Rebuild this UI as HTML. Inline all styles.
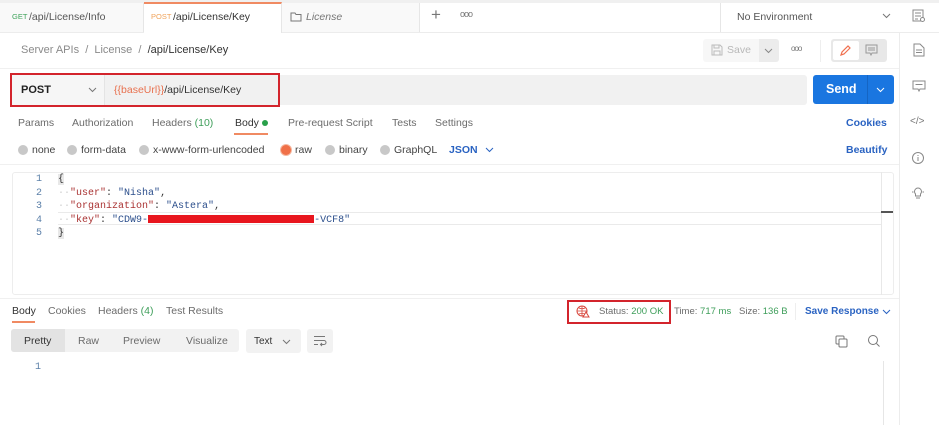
<!DOCTYPE html>
<html><head><meta charset="utf-8">
<style>
*{margin:0;padding:0;box-sizing:border-box}
body{width:939px;height:425px;overflow:hidden;background:#fff;font-family:"Liberation Sans",sans-serif;font-size:10.5px;color:#6b6b6b;position:relative}
.a{position:absolute;white-space:nowrap}
.mono{font-family:"Liberation Mono",monospace;font-size:10px}
.rad{position:absolute;width:10px;height:10px;border-radius:50%;background:#c8c8c8}
</style></head><body>
<div class="a" style="left:0;top:0;width:939px;height:3px;background:#f0f0f0"></div>
<div class="a" style="left:0;top:32px;width:939px;height:1px;background:#ececec"></div>
<div class="a" style="left:0;top:3px;width:144px;height:29px;background:#f9f9f9;border-right:1px solid #e6e6e6"></div>
<div class="a" style="left:144px;top:2px;width:138px;height:31px;background:#fff;border-top:2px solid #f08a62;border-right:1px solid #e6e6e6"></div>
<div class="a" style="left:282px;top:3px;width:138px;height:29px;background:#f9f9f9;border-right:1px solid #e6e6e6"></div>
<div class="a" style="left:420px;top:3px;width:300px;height:29px;background:#fff"></div>
<span class="a" style="left:12px;top:12px;font-size:7.5px;color:#3fa35b">GET</span>
<span class="a" style="left:29px;top:11px;color:#555">/api/License/Info</span>
<span class="a" style="left:151px;top:12px;font-size:7.5px;color:#f0a35a">POST</span>
<span class="a" style="left:173px;top:11px;color:#333">/api/License/Key</span>
<svg class="a" style="left:290px;top:11px" width="12" height="11"><path d="M1 2h4l1 1.5h5v6.5h-10z" fill="none" stroke="#777"/></svg>
<span class="a" style="left:306px;top:11px;font-style:italic;color:#777">License</span>
<span class="a" style="left:431px;top:5px;font-size:17px;color:#777">+</span>
<span class="a" style="left:460px;top:9px;font-size:9px;color:#777;letter-spacing:-1px">ooo</span>
<div class="a" style="left:720px;top:3px;width:1px;height:29px;background:#e6e6e6"></div>
<span class="a" style="left:737px;top:11px;color:#555">No Environment</span>
<svg class="a" style="left:882px;top:13px" width="9" height="6"><path d="M1 1l3.5 3.5L8 1" fill="none" stroke="#777"/></svg>
<div class="a" style="left:899px;top:33px;width:1px;height:392px;background:#ececec"></div>
<svg class="a" style="left:912px;top:9px" width="14" height="14"><rect x="1" y="1" width="10" height="11" fill="none" stroke="#888"/><path d="M3 4h6M3 7h6M3 10h3" stroke="#888"/><circle cx="10.5" cy="10.5" r="2" fill="#fff" stroke="#888"/></svg>
<svg class="a" style="left:913px;top:43px" width="12" height="14"><path d="M1 1h6l4 4v8H1z M3 7h6M3 9.5h6" fill="none" stroke="#888"/></svg>
<svg class="a" style="left:912px;top:80px" width="14" height="13"><path d="M1 1h12v8H8l-1 2-1-2H1z M3.5 4.5h7" fill="none" stroke="#888"/></svg>
<span class="a" style="left:910px;top:116px;font-size:10px;color:#777">&lt;/&gt;</span>
<svg class="a" style="left:911px;top:151px" width="14" height="14"><circle cx="7" cy="7" r="5.5" fill="none" stroke="#888"/><path d="M7 6v4M7 4v1" stroke="#888"/></svg>
<svg class="a" style="left:911px;top:186px" width="14" height="14"><path d="M4.5 8a3.5 3.5 0 1 1 5 0v2h-5z M5 12h4M1 6h1.5M11.5 6H13" fill="none" stroke="#888"/></svg>
<span class="a" style="left:21px;top:44px;font-size:11px;color:#8a8a8a">Server APIs&nbsp; / &nbsp;License&nbsp; / &nbsp;<b style="color:#333;font-weight:normal">/api/License/Key</b></span>
<div class="a" style="left:703px;top:39px;width:76px;height:23px;background:#f7f7f7;border-radius:3px"></div>
<div class="a" style="left:759px;top:39px;width:20px;height:23px;background:#ececec;border-radius:0 3px 3px 0"></div>
<svg class="a" style="left:711px;top:44px" width="12" height="12"><path d="M1 1h8l2 2v8H1z M3 1v3h5V1 M3 11V7h6v4" fill="none" stroke="#bbb"/></svg>
<span class="a" style="left:727px;top:44px;color:#b8b8b8">Save</span>
<svg class="a" style="left:764px;top:48px" width="9" height="6"><path d="M1 1l3.5 3.5L8 1" fill="none" stroke="#888"/></svg>
<span class="a" style="left:791px;top:44px;font-size:8px;color:#777;letter-spacing:-1px">ooo</span>
<div class="a" style="left:820px;top:40px;width:1px;height:22px;background:#eee"></div>
<div class="a" style="left:831px;top:39px;width:56px;height:23px;background:#e8e8e8;border-radius:3px"></div>
<div class="a" style="left:833px;top:41px;width:26px;height:19px;background:#fff;border-radius:2px"></div>
<svg class="a" style="left:839px;top:44px" width="13" height="13"><path d="M2 11l1-3 6-6 2 2-6 6z" fill="none" stroke="#f07050" stroke-width="1.2"/></svg>
<svg class="a" style="left:865px;top:44px" width="13" height="12"><path d="M1 1h11v8H7l-1 2-1-2H1z M3 4h7M3 6h7" fill="none" stroke="#999"/></svg>
<div class="a" style="left:0;top:68px;width:899px;height:1px;background:#f0f0f0"></div>
<div class="a" style="left:11px;top:75px;width:796px;height:30px;background:#f1f1f1;border-radius:3px"></div>
<div class="a" style="left:11px;top:75px;width:94px;height:30px;background:#f6f6f6;border-right:1px solid #e4e4e4"></div>
<div class="a" style="left:10px;top:73px;width:270px;height:34px;border:2px solid #d3242c"></div>
<span class="a" style="left:21px;top:84px;font-size:11px;font-weight:bold;color:#222">POST</span>
<svg class="a" style="left:88px;top:87px" width="9" height="6"><path d="M1 1l3.5 3.5L8 1" fill="none" stroke="#777"/></svg>
<span class="a" style="left:114px;top:84px;color:#333"><span style="color:#e8704e">{{baseUrl}}</span>/api/License/Key</span>
<div class="a" style="left:813px;top:75px;width:81px;height:29px;background:#1a76e0;border-radius:3px"></div>
<div class="a" style="left:867px;top:75px;width:1px;height:29px;background:#1565c4"></div>
<span class="a" style="left:826px;top:82px;font-size:12.5px;font-weight:bold;color:#fff">Send</span>
<svg class="a" style="left:876px;top:87px" width="9" height="6"><path d="M1 1l3.5 3.5L8 1" fill="none" stroke="#fff"/></svg>
<span class="a" style="left:18px;top:117px">Params</span>
<span class="a" style="left:72px;top:117px">Authorization</span>
<span class="a" style="left:152px;top:117px">Headers <span style="color:#3e9e5a">(10)</span></span>
<span class="a" style="left:235px;top:117px;color:#333">Body</span>
<div class="a" style="left:262px;top:120px;width:6px;height:6px;border-radius:50%;background:#29a04a"></div>
<div class="a" style="left:234px;top:133px;width:34px;height:2px;background:#f08a62"></div>
<span class="a" style="left:288px;top:117px">Pre-request Script</span>
<span class="a" style="left:392px;top:117px">Tests</span>
<span class="a" style="left:435px;top:117px">Settings</span>
<span class="a" style="left:846px;top:117px;font-weight:bold;color:#2a63c2">Cookies</span>
<div class="rad" style="left:18px;top:145px"></div><span class="a" style="left:32px;top:144px;color:#444">none</span>
<div class="rad" style="left:67px;top:145px"></div><span class="a" style="left:81px;top:144px;color:#444">form-data</span>
<div class="rad" style="left:139px;top:145px"></div><span class="a" style="left:153px;top:144px;color:#444">x-www-form-urlencoded</span>
<div class="rad" style="left:281px;top:145px;background:#f07048;box-shadow:0 0 0 1px #f5b8a0"></div><span class="a" style="left:295px;top:144px;color:#444">raw</span>
<div class="rad" style="left:325px;top:145px"></div><span class="a" style="left:339px;top:144px;color:#444">binary</span>
<div class="rad" style="left:380px;top:145px"></div><span class="a" style="left:394px;top:144px;color:#444">GraphQL</span>
<span class="a" style="left:449px;top:144px;font-weight:bold;color:#2a63c2">JSON</span>
<svg class="a" style="left:485px;top:147px" width="9" height="6"><path d="M1 1l3.5 3.5L8 1" fill="none" stroke="#2a63c2"/></svg>
<span class="a" style="left:846px;top:144px;font-weight:bold;color:#2a63c2">Beautify</span>
<div class="a" style="left:0;top:164px;width:899px;height:1px;background:#f0f0f0"></div>
<div class="a" style="left:12px;top:172px;width:882px;height:123px;border:1px solid #ededed;border-radius:3px"></div>
<div class="a" style="left:881px;top:172px;width:1px;height:123px;background:#e8e8e8"></div>
<div class="a" style="left:881px;top:211px;width:12px;height:2px;background:#555"></div>
<div class="a" style="left:58px;top:212px;width:823px;height:13px;border-top:1px solid #eaeaea;border-bottom:1px solid #eaeaea"></div>
<div class="a mono" style="left:30px;top:173px;line-height:13.5px;color:#5a7fa8;text-align:right;width:12px">1<br>2<br>3<br>4<br>5</div>
<div class="a mono" style="left:58px;top:173px;line-height:13.5px;color:#333"><span style="background:#e8e8e8">{</span><br><span style="color:#ccc">··</span><span style="color:#a33">"user"</span>: <span style="color:#2c4f8c">"Nisha"</span>,<br><span style="color:#ccc">··</span><span style="color:#a33">"organization"</span>: <span style="color:#2c4f8c">"Astera"</span>,<br><span style="color:#ccc">··</span><span style="color:#a33">"key"</span>: <span style="color:#2c4f8c">"CDW9-<span style="display:inline-block;width:166px;height:8px;background:#e8161e;vertical-align:middle"></span>-VCF8"</span><br><span style="background:#e8e8e8">}</span></div>
<div class="a" style="left:0;top:298px;width:899px;height:1px;background:#f0f0f0"></div>
<span class="a" style="left:12px;top:305px;color:#333">Body</span>
<div class="a" style="left:12px;top:321px;width:23px;height:2px;background:#f08a62"></div>
<span class="a" style="left:48px;top:305px">Cookies</span>
<span class="a" style="left:98px;top:305px">Headers <span style="color:#3e9e5a">(4)</span></span>
<span class="a" style="left:166px;top:305px">Test Results</span>
<div class="a" style="left:567px;top:300px;width:104px;height:24px;border:2px solid #d3242c"></div>
<svg class="a" style="left:576px;top:305px" width="14" height="13"><circle cx="6" cy="6" r="5" fill="none" stroke="#d8463c"/><path d="M1 6h10M6 1v10M3 3c2 1 4 1 6 0M3 9c2-1 4-1 6 0" fill="none" stroke="#d8463c" stroke-width=".8"/><path d="M10 7l3 5h-6z" fill="#fff" stroke="#d8463c"/></svg>
<span class="a" style="left:599px;top:306px;font-size:9.5px">Status: <span style="color:#3e9e5a">200 OK</span></span>
<span class="a" style="left:674px;top:306px;font-size:9.5px">Time: <span style="color:#3e9e5a">717 ms</span></span>
<span class="a" style="left:739px;top:306px;font-size:9.5px">Size: <span style="color:#3e9e5a">136 B</span></span>
<div class="a" style="left:795px;top:303px;width:1px;height:17px;background:#eee"></div>
<span class="a" style="left:805px;top:306px;font-weight:bold;color:#2a63c2;font-size:10px">Save Response</span>
<svg class="a" style="left:882px;top:309px" width="9" height="6"><path d="M1 1l3.5 3.5L8 1" fill="none" stroke="#2a63c2"/></svg>
<div class="a" style="left:11px;top:329px;width:228px;height:23px;background:#f2f2f2;border-radius:3px"></div>
<div class="a" style="left:11px;top:329px;width:54px;height:23px;background:#e3e3e3;border-radius:3px 0 0 3px"></div>
<span class="a" style="left:24px;top:335px;color:#333">Pretty</span>
<span class="a" style="left:78px;top:335px">Raw</span>
<span class="a" style="left:123px;top:335px">Preview</span>
<span class="a" style="left:186px;top:335px">Visualize</span>
<div class="a" style="left:246px;top:329px;width:55px;height:24px;background:#f2f2f2;border-radius:3px"></div>
<span class="a" style="left:254px;top:336px;color:#333;font-size:10px">Text</span>
<svg class="a" style="left:282px;top:339px" width="9" height="6"><path d="M1 1l3.5 3.5L8 1" fill="none" stroke="#777"/></svg>
<div class="a" style="left:307px;top:329px;width:26px;height:24px;background:#f2f2f2;border-radius:3px"></div>
<svg class="a" style="left:313px;top:335px" width="14" height="12"><path d="M1 1.5h11M1 5.5h10a2 2 0 0 1 0 4H8M1 9.5h4M9 8l-1.5 1.5L9 11" fill="none" stroke="#777"/></svg>
<svg class="a" style="left:835px;top:335px" width="14" height="14"><rect x="1" y="1" width="8" height="8" rx="1" fill="none" stroke="#777"/><rect x="4" y="4" width="8" height="8" rx="1" fill="#fff" stroke="#777"/></svg>
<svg class="a" style="left:867px;top:334px" width="14" height="14"><circle cx="6" cy="6" r="4.5" fill="none" stroke="#777"/><path d="M9.5 9.5l3 3" stroke="#777"/></svg>
<span class="a mono" style="left:35px;top:362px;color:#5a7fa8">1</span>
<div class="a" style="left:883px;top:361px;width:1px;height:64px;background:#e6e6e6"></div>
</body></html>
